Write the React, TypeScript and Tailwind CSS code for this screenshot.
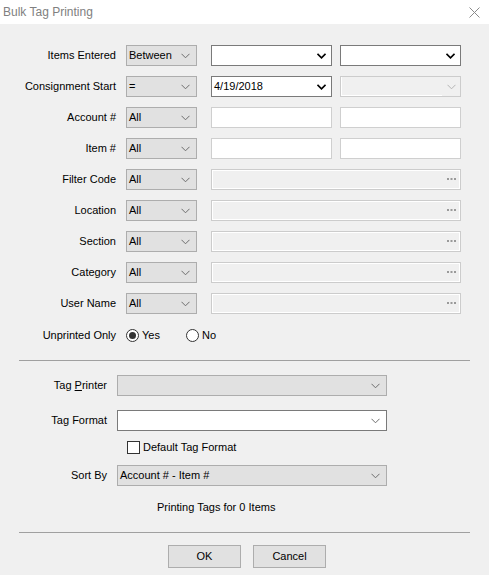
import React from "react";

const FONT = { fontFamily: '"Liberation Sans", Arial, sans-serif' };

function Chevron({ dark, faded }: { dark?: boolean; faded?: boolean }) {
  const color = dark ? "#000000" : faded ? "#b4b4b4" : "#6d6d6d";
  return (
    <svg width="9" height="6" viewBox="0 0 9 6" className="shrink-0" aria-hidden>
      <path d="M0.5 0.8 L4.5 4.8 L8.5 0.8" fill="none" stroke={color} strokeWidth={dark ? 1.6 : 1} />
    </svg>
  );
}

function GraySelect({ value, width = "w-[71px]" }: { value?: string; width?: string }) {
  return (
    <div
      className={`${width} flex h-[21px] shrink-0 items-center justify-between border border-[#adadad] bg-[#e1e1e1] pl-[2px] pr-[6px] text-black`}
    >
      <span>{value}</span>
      <Chevron />
    </div>
  );
}

function WhiteCombo({ value, width = "w-[121px]" }: { value?: string; width?: string }) {
  return (
    <div
      className={`${width} flex h-[21px] shrink-0 items-center justify-between border border-[#7a7a7a] bg-white pl-[2px] pr-[5px] text-black`}
    >
      <span>{value}</span>
      <Chevron dark />
    </div>
  );
}

function DisabledCombo() {
  return (
    <div className="flex h-[21px] w-[121px] shrink-0 border border-[#cccccc] bg-[#f0f0f0]">
      <div className="flex-1 border-b border-l border-white" />
      <div className="flex w-[18px] items-center justify-center">
        <Chevron faded />
      </div>
    </div>
  );
}

function TextBox() {
  return <div className="h-[21px] w-[121px] shrink-0 border border-[#cfcfcf] bg-white" />;
}

function BrowseBox() {
  return (
    <div className="flex h-[21px] w-[250px] shrink-0 items-center justify-end border border-[#cccccc] bg-[#f0f0f0] pr-[4px] shadow-[inset_0_0_0_1px_#ffffff]">
      <svg width="9" height="3" viewBox="0 0 9 3" className="mb-[1px]" aria-hidden>
        <rect x="0" y="0" width="2" height="2" fill="#9a9a9a" />
        <rect x="3.5" y="0" width="2" height="2" fill="#9a9a9a" />
        <rect x="7" y="0" width="2" height="2" fill="#9a9a9a" />
      </svg>
    </div>
  );
}

function Radio({ checked, label }: { checked?: boolean; label: string }) {
  return (
    <div className="flex items-center gap-[3px]">
      <div className="flex h-[13px] w-[13px] items-center justify-center rounded-full border border-[#333333] bg-white">
        {checked && <div className="h-[7px] w-[7px] rounded-full bg-[#333333]" />}
      </div>
      <span>{label}</span>
    </div>
  );
}

function Row({ label, children }: { label: string; children: React.ReactNode }) {
  return (
    <div className="flex h-[21px] items-center">
      <div className="w-[116px] shrink-0 text-right">{label}</div>
      <div className="ml-[10px] flex items-center">{children}</div>
    </div>
  );
}

export default function App() {
  const filterRows = ["Filter Code", "Location", "Section", "Category", "User Name"];

  return (
    <div className="flex h-[575px] w-[489px] flex-col bg-[#f0f0f0] text-[11px] text-black" style={FONT}>
      <div className="flex h-[24px] shrink-0 items-center justify-between bg-white pl-[3px] pr-[9px]">
        <span className="text-[12px] text-[#808080]">Bulk Tag Printing</span>
        <svg width="11" height="11" viewBox="0 0 11 11" aria-hidden>
          <path d="M0.5 0.5 L10.5 10.5 M10.5 0.5 L0.5 10.5" stroke="#8a8a8a" strokeWidth="1" />
        </svg>
      </div>

      <div className="flex flex-col gap-[10px] pt-[21px]">
        <Row label="Items Entered">
          <GraySelect value="Between" />
          <div className="ml-[14px] flex gap-[8px]">
            <WhiteCombo />
            <WhiteCombo />
          </div>
        </Row>
        <Row label="Consignment Start">
          <GraySelect value="=" />
          <div className="ml-[14px] flex gap-[8px]">
            <WhiteCombo value="4/19/2018" />
            <DisabledCombo />
          </div>
        </Row>
        <Row label="Account #">
          <GraySelect value="All" />
          <div className="ml-[14px] flex gap-[8px]">
            <TextBox />
            <TextBox />
          </div>
        </Row>
        <Row label="Item #">
          <GraySelect value="All" />
          <div className="ml-[14px] flex gap-[8px]">
            <TextBox />
            <TextBox />
          </div>
        </Row>
        {filterRows.map((l) => (
          <Row key={l} label={l}>
            <GraySelect value="All" />
            <div className="ml-[14px]">
              <BrowseBox />
            </div>
          </Row>
        ))}
      </div>

      <div className="mt-[11px] flex h-[20px] items-center">
        <div className="w-[116px] shrink-0 text-right">Unprinted Only</div>
        <div className="ml-[10px] w-[60px]">
          <Radio checked label="Yes" />
        </div>
        <Radio label="No" />
      </div>

      <div className="mx-[19px] mt-[15px] border-t border-[#a0a0a0]" />

      <div className="mt-[14px] flex flex-col">
        <div className="flex h-[21px] items-center">
          <div className="w-[107px] shrink-0 text-right">
            Tag <span className="underline">P</span>rinter
          </div>
          <div className="ml-[10px]">
            <GraySelect width="w-[270px]" />
          </div>
        </div>
        <div className="mt-[14px] flex h-[21px] items-center">
          <div className="w-[107px] shrink-0 text-right">Tag Format</div>
          <div className="ml-[10px] flex h-[21px] w-[270px] items-center justify-end border border-[#7a7a7a] bg-white pr-[6px]">
            <Chevron />
          </div>
        </div>
        <div className="mt-[10px] flex h-[13px] items-center pl-[127px]">
          <div className="h-[13px] w-[13px] border border-[#333333] bg-white" />
          <span className="ml-[3px]">Default Tag Format</span>
        </div>
        <div className="mt-[11px] flex h-[21px] items-center">
          <div className="w-[107px] shrink-0 text-right">Sort By</div>
          <div className="ml-[10px]">
            <GraySelect value="Account # - Item #" width="w-[270px]" />
          </div>
        </div>
        <div className="mt-[13px] flex h-[16px] items-center pl-[157px]">Printing Tags for 0 Items</div>
      </div>

      <div className="mx-[19px] mt-[17px] border-t border-[#a0a0a0]" />

      <div className="mt-[12px] flex gap-[12px] pl-[168px]">
        <button className="h-[23px] w-[73px] border border-[#adadad] bg-[#e1e1e1] text-[11px]">OK</button>
        <button className="h-[23px] w-[73px] border border-[#adadad] bg-[#e1e1e1] text-[11px]">Cancel</button>
      </div>
    </div>
  );
}
